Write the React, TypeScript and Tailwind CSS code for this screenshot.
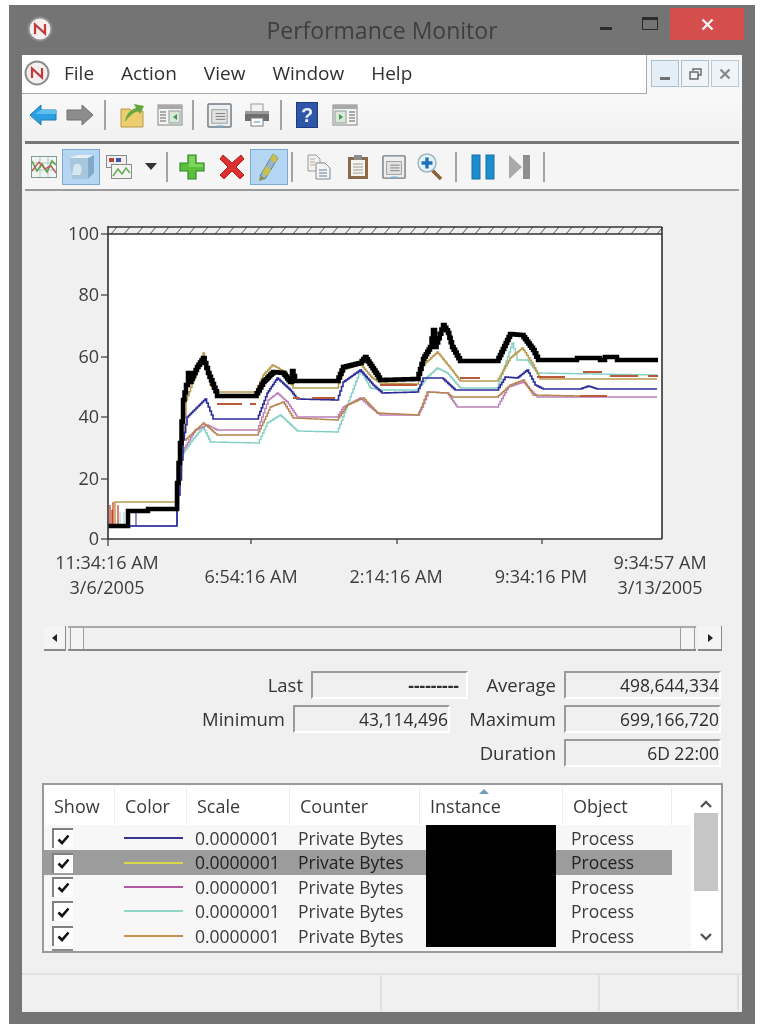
import React from "react";

type Pt = [number, number];

// turn a rough outline into the stair-stepped trace perfmon draws
const stepped = (pts: Pt[]): string => {
  let d = `M${pts[0][0]} ${pts[0][1]}`;
  for (let i = 1; i < pts.length; i++) {
    const [x0, y0] = pts[i - 1];
    const [x1, y1] = pts[i];
    const dy = y1 - y0;
    const dx = x1 - x0;
    if (dx === 0 || dy === 0) {
      d += `L${x1} ${y1}`;
      continue;
    }
    const n = Math.max(1, Math.round(Math.abs(dx) / 1.5));
    for (let s = 1; s <= n; s++) {
      d += `L${x0 + (dx * s) / n} ${y0 + (dy * (s - 1)) / n}L${x0 + (dx * s) / n} ${y0 + (dy * s) / n}`;
    }
  }
  return d;
};

const black: Pt[] = [[108,526],[128,526],[128,511],[148,511],[148,509],[177,509],[177,483],[180,443],[183,400],[186,385],[188,373],[190,382],[197,367],[203,358],[208,373],[217,395],[217,396],[255,396],[263,382],[273,372],[283,373],[290,382],[292,371],[295,381],[337,381],[343,367],[360,363],[365,357],[377,375],[380,380],[417,379],[423,359],[430,347],[433,330],[435,347],[443,325],[448,333],[452,347],[460,361],[497,361],[510,334],[522,335],[533,350],[538,360],[576,360],[577,358],[598,358],[600,360],[604,360],[605,357],[616,357],[617,360],[658,360]];
const blue: Pt[] = [[130,526],[177,526],[177,510],[180,480],[183,440],[187,417],[205,399],[213,419],[257,419],[267,393],[277,378],[290,390],[297,399],[337,400],[343,382],[360,370],[373,385],[382,393],[417,392],[423,378],[442,378],[455,390],[497,390],[505,377],[517,378],[527,370],[535,385],[543,389],[580,389],[588,386],[597,389],[657,389]];
const tan: Pt[] = [[115,526],[115,502],[177,502],[180,470],[186,400],[195,375],[203,353],[210,385],[217,392],[255,392],[263,375],[272,365],[285,372],[293,388],[337,388],[343,370],[360,364],[372,378],[380,383],[417,384],[423,365],[437,352],[450,368],[460,381],[497,381],[510,358],[522,348],[533,365],[540,379],[657,379]];
const magenta: Pt[] = [[183,450],[195,430],[207,425],[217,430],[257,430],[268,400],[277,393],[287,402],[297,417],[337,417],[343,407],[360,398],[370,407],[380,415],[417,415],[422,407],[428,392],[447,393],[457,407],[497,407],[508,387],[523,382],[537,397],[657,397]];
const teal: Pt[] = [[183,453],[192,440],[203,427],[210,442],[258,443],[267,423],[280,415],[297,431],[337,432],[350,397],[360,370],[370,388],[380,390],[417,390],[427,377],[437,368],[447,373],[460,388],[497,388],[512,343],[517,360],[527,360],[537,373],[657,375]];
const orange: Pt[] = [[185,440],[203,423],[217,435],[257,435],[270,407],[283,402],[293,418],[337,420],[347,405],[363,398],[377,413],[418,415],[427,392],[447,393],[452,397],[497,397],[510,385],[523,380],[533,395],[580,396],[607,396]];

const traces: { pts: Pt[]; color: string; width: string }[] = [
  { pts: teal, color: "#84cfc4", width: "1.4" },
  { pts: magenta, color: "#bb7fb8", width: "1.4" },
  { pts: orange, color: "#b7834f", width: "1.4" },
  { pts: tan, color: "#b89a4e", width: "1.5" },
  { pts: blue, color: "#2b2b9a", width: "1.6" },
];

const redDashes = ["M217 404H242", "M250 404H256", "M293 398H300", "M312 398H335", "M380 385H417", "M460 378H480", "M537 377H565", "M610 376H638", "M648 376H658", "M583 372H602", "M580 396H607"];

const PerfChart = () => (
  <svg viewBox="22 191 720 421" className="block h-[421px] w-[720px]" fontFamily="'Open Sans', sans-serif" fontSize="18" fill="#3c3c3c">
    <rect x="108" y="227" width="554" height="312" fill="#fff" />
    <rect x="108" y="227" width="554" height="7" fill="#efefef" />
    {Array.from({ length: 43 }, (_, i) => (
      <path key={i} d={`M${111 + i * 13} 234L${117 + i * 13} 227`} stroke="#555" strokeWidth="1" />
    ))}
    <path d="M108 234H662M108 227H662" stroke="#333" strokeWidth="1.3" />
    <path d="M110 526V505M113 526V502M112 526V510M118 526V505M128 526V510" stroke="#c8402a" strokeWidth="1.3" fill="none" />
    <path d="M120 526V512M124 526V512" stroke="#9ccfd0" strokeWidth="1" />
    <path d="M136 526V511M130 526H177V510" stroke="#4a4ab0" strokeWidth="1.2" fill="none" />
    {traces.map((t) => (
      <path key={t.color} d={stepped(t.pts)} stroke={t.color} strokeWidth={t.width} fill="none" />
    ))}
    <path d={redDashes.join("")} stroke="#bb5a3a" strokeWidth="2" fill="none" />
    <path d={stepped(black)} stroke="#000" strokeWidth="4.5" fill="none" />
    <path d="M108 226V540M108 539H662M662 227V539" stroke="#333" strokeWidth="1.6" fill="none" />
    {[["100", 234], ["80", 295], ["60", 357], ["40", 417], ["20", 479], ["0", 539]].map(([label, y]) => (
      <g key={label}>
        <path d={`M101 ${y}H108`} stroke="#444" strokeWidth="1.3" />
        <text x="99" y={Number(y) + 6} textAnchor="end">{label}</text>
      </g>
    ))}
    {[251, 397, 542].map((x) => (
      <path key={x} d={`M${x} 539V544`} stroke="#444" strokeWidth="1.3" />
    ))}
    <path d="M108 539V546" stroke="#444" strokeWidth="1.3" />
    <text x="107" y="569" textAnchor="middle">11:34:16 AM</text>
    <text x="107" y="594" textAnchor="middle">3/6/2005</text>
    <text x="251" y="583" textAnchor="middle">6:54:16 AM</text>
    <text x="396" y="583" textAnchor="middle">2:14:16 AM</text>
    <text x="541" y="583" textAnchor="middle">9:34:16 PM</text>
    <text x="660" y="569" textAnchor="middle">9:34:57 AM</text>
    <text x="660" y="594" textAnchor="middle">3/13/2005</text>
  </svg>
);

/* ---- icons ---- */

const PerfLogo = ({ size }: { size: number }) => (
  <svg width={size} height={size} viewBox="0 0 26 26">
    <circle cx="13" cy="13" r="11.5" fill="#f4eeee" stroke="#8d8d8d" strokeWidth="2" />
    <path d="M8 18V8.5L18 17.5V8" fill="none" stroke="#c03a3a" strokeWidth="2.2" />
  </svg>
);

const BackArrow = () => (
  <svg width="28" height="22" viewBox="0 0 28 22">
    <path d="M1 11L12 1V6H27V16H12V21Z" fill="#2b9fe0" stroke="#1c78b8" strokeWidth="1" />
    <path d="M12 6H27V10H6Z" fill="#5cc0f0" />
  </svg>
);

const ForwardArrow = () => (
  <svg width="28" height="22" viewBox="0 0 28 22">
    <path d="M27 11L16 1V6H1V16H16V21Z" fill="#8c8c8c" stroke="#707070" strokeWidth="1" />
  </svg>
);

const Folder = () => (
  <svg width="26" height="26" viewBox="0 0 26 26">
    <path d="M2 7H11L13 9H24V25H2Z" fill="#edcd6f" stroke="#b79a4b" />
    <path d="M6 20C7 12 11 8 17 6L15 2L25 4L21 12L19 9C14 11 10 14 6 20Z" fill="#62a83a" />
  </svg>
);

const PanelIcon = ({ flip }: { flip?: boolean }) => (
  <svg width="26" height="22" viewBox="0 0 26 22">
    <rect x="1" y="1" width="24" height="20" fill="#f4f4f4" stroke="#858585" />
    <rect x="1" y="1" width="24" height="4" fill="#a9a9a9" />
    <rect x={flip ? "3" : "12"} y="7" width="11" height="12" fill="#dbe6dc" stroke="#8aa08e" />
    <path d={flip ? "M7 10L11 13L7 16Z" : "M20 10L16 13L20 16Z"} fill="#3c9a4a" />
    <path d={flip ? "M17 8h6M17 11h6M17 14h6M17 17h6" : "M3 8h6M3 11h6M3 14h6M3 17h6"} stroke="#909090" strokeWidth="1.5" />
  </svg>
);

const PropsIcon = ({ size }: { size: number }) => (
  <svg width={size} height={size} viewBox="0 0 26 26">
    <rect x="1" y="1" width="24" height="24" rx="1" fill="#efefef" stroke="#6f7b85" strokeWidth="1.5" />
    <rect x="5" y="7" width="16" height="14" fill="#e3e3e3" stroke="#9a9a9a" />
    <path d="M9 11H19M9 14H19M9 17H19" stroke="#7d7d7d" />
    <path d="M10 24H17" stroke="#6fb4d8" strokeWidth="1.5" />
  </svg>
);

const Printer = () => (
  <svg width="26" height="24" viewBox="0 0 26 24">
    <rect x="7" y="1" width="12" height="8" fill="#f3f3f3" stroke="#9a9a9a" />
    <rect x="1" y="8" width="24" height="10" fill="#6e6e6e" />
    <rect x="1" y="8" width="24" height="3" fill="#9c9c9c" />
    <rect x="7" y="15" width="12" height="8" fill="#fff" stroke="#7c7c7c" />
    <path d="M10 19H16" stroke="#4d90b8" />
  </svg>
);

const HelpIcon = () => (
  <svg width="22" height="26" viewBox="0 0 22 26">
    <rect x="0.5" y="0.5" width="21" height="25" fill="#2f55a8" stroke="#1f3b80" />
    <text x="11" y="20" textAnchor="middle" fontSize="20" fontWeight="700" fill="#e8eefc" fontFamily="'Liberation Sans', sans-serif">?</text>
  </svg>
);

const GraphIcon = () => (
  <svg width="26" height="22" viewBox="0 0 26 22">
    <rect x="0.5" y="0.5" width="25" height="21" fill="#f1f5f3" stroke="#7e9a96" />
    <path d="M1 7H25M1 14H25M9 1V21M17 1V21" stroke="#b7c6c8" />
    <path d="M1 5L6 15L11 8L16 16L21 5L25 9" fill="none" stroke="#5da34c" strokeWidth="1.6" />
    <path d="M1 15L8 6L14 13L20 10L25 17" fill="none" stroke="#c45a55" strokeWidth="1.4" />
  </svg>
);

const CubeIcon = () => (
  <svg width="30" height="28" viewBox="0 0 30 28">
    <path d="M3 5L12 2H28V20L22 26H6Z" fill="#cfe2ef" />
    <path d="M3 5H22V26H6Z" fill="#a8c7dc" />
    <path d="M3 5L12 2H28L22 5Z" fill="#e7f0f6" />
    <path d="M22 5L28 2V20L22 26Z" fill="#7faac9" />
    <path d="M8 12C14 8 18 14 14 22H6Z" fill="#e4eef5" opacity="0.8" />
  </svg>
);

const MultiChartIcon = () => (
  <svg width="26" height="24" viewBox="0 0 26 24">
    <rect x="0.5" y="0.5" width="20" height="12" fill="#eceff3" stroke="#8c8c8c" />
    <rect x="3" y="3" width="5" height="4" fill="#b9413f" />
    <rect x="10" y="3" width="5" height="4" fill="#4a4fa0" />
    <rect x="5.5" y="9.5" width="20" height="14" fill="#f2f4ee" stroke="#8c8c8c" />
    <path d="M7 21L12 14L16 19L20 13L24 18" fill="none" stroke="#6aa85a" strokeWidth="1.5" />
  </svg>
);

const PlusIcon = () => (
  <svg width="26" height="26" viewBox="0 0 26 26">
    <path d="M9 1H17V9H25V17H17V25H9V17H1V9H9Z" fill="#5cc03c" stroke="#2f8a2a" strokeWidth="1.2" />
    <path d="M10 2H16V10H24V13H10Z" fill="#8ade6a" opacity="0.7" />
  </svg>
);

const RedX = () => (
  <svg width="26" height="26" viewBox="0 0 26 26">
    <path d="M4 1L13 9L22 1L25 5L17 13L25 21L21 25L13 17L5 25L1 21L9 13L1 5Z" fill="#dd3130" stroke="#b02424" />
  </svg>
);

const PenIcon = () => (
  <svg width="24" height="30" viewBox="0 0 24 30">
    <path d="M16 2L21 6L8 27L3 24Z" fill="#9cb3c4" stroke="#5f7f96" />
    <path d="M16 2L21 6L18 11L13 7Z" fill="#c8c14a" />
    <path d="M9 14L14 18L10 24L5 21Z" fill="#c8c14a" />
    <path d="M3 24L8 27L2 29Z" fill="#8f8f3a" />
  </svg>
);

const CopyIcon = () => (
  <svg width="24" height="26" viewBox="0 0 24 26">
    <path d="M1 1H9L13 5V17H1Z" fill="#f1f1f1" stroke="#9a9a9a" />
    <path d="M9 9H18L23 14V25H9Z" fill="#f4f4f4" stroke="#7f8b90" />
    <path d="M12 16H20M12 19H20M12 22H20" stroke="#5f7f96" />
    <path d="M3 5H8M3 8H8M3 11H8" stroke="#b9a98c" />
  </svg>
);

const ClipboardIcon = () => (
  <svg width="22" height="26" viewBox="0 0 22 26">
    <rect x="1" y="3" width="20" height="22" fill="#8a6a4a" />
    <rect x="4" y="6" width="14" height="16" fill="#f6f4ee" />
    <rect x="7" y="1" width="8" height="5" fill="#8d8d8d" />
    <path d="M6 10H16M6 13H16M6 16H16M6 19H16" stroke="#9c9c9c" />
  </svg>
);

const ZoomIcon = () => (
  <svg width="26" height="28" viewBox="0 0 26 28">
    <path d="M15 17L24 26" stroke="#8a6036" strokeWidth="3.5" />
    <circle cx="10" cy="10" r="9" fill="#e8f1f6" stroke="#9eb5c2" strokeWidth="1.5" />
    <path d="M10 4.5V15.5M4.5 10H15.5" stroke="#1f74b8" strokeWidth="3.4" />
  </svg>
);

const PauseIcon = () => (
  <svg width="24" height="26" viewBox="0 0 24 26">
    <rect x="1" y="1" width="8" height="24" fill="#1c8ed0" stroke="#1a6f9f" />
    <rect x="15" y="1" width="8" height="24" fill="#1c8ed0" stroke="#1a6f9f" />
  </svg>
);

const StepIcon = () => (
  <svg width="24" height="26" viewBox="0 0 24 26">
    <path d="M1 1L14 13L1 25Z" fill="#a9a9a9" />
    <rect x="15" y="1" width="7" height="24" fill="#8f8f8f" />
  </svg>
);

const CheckBox = () => (
  <span className="flex h-[20px] w-[21px] items-center justify-center border-t-2 border-l-2 border-[#808080] bg-white">
    <svg width="13" height="11" viewBox="0 0 13 11">
      <path d="M1.5 5.5L5 9L11.5 1.5" fill="none" stroke="#111" strokeWidth="2.6" />
    </svg>
  </span>
);

const ToolSep = ({ className }: { className: string }) => (
  <div className={`flex justify-center ${className}`}>
    <div className="h-[30px] w-[2px] bg-[#a3a3a3]" />
  </div>
);

const Slot = ({ className, children }: { className: string; children: React.ReactNode }) => (
  <div className={`flex items-center justify-center ${className}`}>{children}</div>
);

const Active = ({ className, children }: { className: string; children: React.ReactNode }) => (
  <div className={`flex h-[36px] items-center justify-center border border-[#7fa9d0] bg-[#b4d6f2] ${className}`}>{children}</div>
);

const StatBox = ({ value, className }: { value: string; className: string }) => (
  <div className={`flex h-[28px] items-center justify-end border-2 border-t-[#9a9a9a] border-r-white border-b-white border-l-[#9a9a9a] text-[17.5px] text-[#2e2e2e] ${className}`}>
    {value}
  </div>
);

const columns = ["Show", "Color", "Scale", "Counter", "Instance", "Object"];
const headerWidths = ["w-[71px]", "w-[72px]", "w-[103px]", "w-[130px]", "w-[143px]", "w-[109px]"];
const rows = [
  { color: "bg-[#35358f]", selected: false },
  { color: "bg-[#d7d84e]", selected: true },
  { color: "bg-[#b05aa0]", selected: false },
  { color: "bg-[#8fd8c8]", selected: false },
  { color: "bg-[#c98f55]", selected: false },
];

const CounterList = () => (
  <div className="relative mr-[19px] ml-[20px] flex h-[170px] overflow-hidden border-2 border-[#9a9a9a] bg-[#f7f7f7] text-[17.5px] text-[#3a3a3a]">
    <div className="w-[647px] shrink-0">
      <div className="flex h-[40px] items-center bg-white pt-[2px] text-[18px]">
        {columns.map((c, i) => (
          <div key={c} className={`relative flex h-full shrink-0 items-center border-r border-[#ececec] pl-[10px] ${headerWidths[i]}`}>
            {c === "Instance" && (
              <svg className="absolute top-[1px] left-[58px]" width="12" height="6" viewBox="0 0 12 6">
                <path d="M1 6L6 1L11 6" fill="#6f9fb8" />
              </svg>
            )}
            {c}
          </div>
        ))}
      </div>
      <div className="pt-[1px]">
        {rows.map((r, i) => (
          <div key={i} className="flex h-[24.4px] items-center">
            <div className={`flex h-full w-[29px] shrink-0 items-center justify-end ${r.selected ? "bg-[#9c9c9c]" : ""}`}>
              <CheckBox />
            </div>
            <div className={`flex h-full w-[599px] shrink-0 items-center ${r.selected ? "bg-[#9c9c9c] text-[#222]" : ""}`}>
              <div className="w-[122px] shrink-0 pl-[51px]">
                <div className={`h-[2px] w-[59px] ${r.color}`} />
              </div>
              <div className="w-[103px] shrink-0">0.0000001</div>
              <div className="w-[273px] shrink-0">Private Bytes</div>
              <div>Process</div>
            </div>
          </div>
        ))}
      </div>
      <div className="mt-[1px] ml-[8px] h-[2px] w-[21px] bg-[#8a8a8a]" />
    </div>
    <div className="flex flex-1 flex-col items-center bg-white">
      <svg className="mt-[15px]" width="14" height="9" viewBox="0 0 14 9">
        <path d="M2 7L7 2L12 7" fill="none" stroke="#555" strokeWidth="2.4" />
      </svg>
      <div className="mt-[4px] h-[78px] w-[24px] bg-[#c6c6c6]" />
      <svg className="mt-[41px]" width="14" height="9" viewBox="0 0 14 9">
        <path d="M2 2L7 7L12 2" fill="none" stroke="#555" strokeWidth="2.4" />
      </svg>
    </div>
    <div className="absolute top-[40px] left-[382px] h-[122px] w-[130px] bg-black" />
  </div>
);

export default function App() {
  return (
    <div className="h-[1031px] w-[766px] overflow-hidden bg-white pt-[5px] pl-[9px] blur-[0.6px]" style={{ fontFamily: "'Open Sans', sans-serif" }}>
      <div className="h-[1019px] w-[746px] bg-[#747474]">
        {/* Title bar */}
        <div className="grid h-[50px] grid-cols-[1fr_auto_1fr]">
          <div className="flex items-center pb-[2px] pl-[18px]">
            <PerfLogo size={26} />
          </div>
          <div className="flex items-center text-[23px] text-[#3e3e3e]">Performance Monitor</div>
          <div className="flex items-start justify-end pt-[3px] pr-[11px]">
            <div className="mt-[19px] mr-[30px] h-[3px] w-[12px] bg-[#2b2b2b]" />
            <div className="mt-[9px] mr-[12px] h-[13px] w-[16px] border-[1.5px] border-t-[3px] border-[#2b2b2b]" />
            <div className="flex h-[32px] w-[74px] items-center justify-center bg-[#d44e4e]">
              <svg width="13" height="13" viewBox="0 0 13 13">
                <path d="M1.5 1.5L11.5 11.5M11.5 1.5L1.5 11.5" stroke="#f4f4f4" strokeWidth="2.4" />
              </svg>
            </div>
          </div>
        </div>

        {/* Client area */}
        <div className="ml-[13px] h-[957px] w-[720px] bg-[#f0f0f0]">
          {/* Menu bar */}
          <div className="flex h-[39px]">
            <div className="flex w-[625px] items-center gap-[27px] border-r border-b border-[#a9a9a9] bg-white pb-[2px] pl-[2px] text-[19px] text-[#303030]">
              <div className="-mr-[13px]">
                <PerfLogo size={26} />
              </div>
              <span>File</span>
              <span>Action</span>
              <span>View</span>
              <span>Window</span>
              <span>Help</span>
            </div>
            <div className="flex flex-1 items-start gap-[2px] bg-[#f7f7f7] pt-[5px] pl-[4px]">
              <div className="flex h-[27px] w-[28px] items-end justify-center border border-[#a9c0d0] bg-[#e3eef6] pb-[6px]">
                <div className="h-[3px] w-[10px] bg-[#707070]" />
              </div>
              <div className="flex h-[27px] w-[28px] items-center justify-center border border-[#a9c0d0] bg-[#eef4f8]">
                <svg width="13" height="12" viewBox="0 0 13 12">
                  <path d="M4 3V1H12V7H9M1 4H9V11H1Z" fill="none" stroke="#6a6a6a" strokeWidth="1.5" />
                </svg>
              </div>
              <div className="flex h-[27px] w-[28px] items-center justify-center border border-[#b8c8d4] bg-[#eef4f8]">
                <svg width="12" height="12" viewBox="0 0 12 12">
                  <path d="M1.5 1.5L10.5 10.5M10.5 1.5L1.5 10.5" stroke="#8a8a8a" strokeWidth="2.4" />
                </svg>
              </div>
            </div>
          </div>

          {/* Toolbar one */}
          <div className="flex h-[47px] items-center bg-gradient-to-b from-[#f9f9f9] to-[#f1f1f1] pb-[5px] pl-[4px]">
            <Slot className="w-[34px]"><BackArrow /></Slot>
            <Slot className="ml-[3px] w-[34px]"><ForwardArrow /></Slot>
            <ToolSep className="w-[16px]" />
            <Slot className="w-[38px]"><Folder /></Slot>
            <Slot className="w-[38px]"><PanelIcon /></Slot>
            <ToolSep className="w-[8px]" />
            <Slot className="w-[44px]"><PropsIcon size={25} /></Slot>
            <Slot className="w-[32px]"><Printer /></Slot>
            <ToolSep className="w-[16px]" />
            <Slot className="w-[36px]"><HelpIcon /></Slot>
            <Slot className="w-[40px]"><PanelIcon flip /></Slot>
          </div>

          {/* Toolbar two */}
          <div className="mx-[3px] border-t-[3px] border-b-2 border-t-[#767676] border-b-[#9a9a9a]">
            <div className="-mx-[3px] flex h-[45px] items-center bg-[#f5f5f5] pl-[4px]">
              <Slot className="w-[36px]"><GraphIcon /></Slot>
              <Active className="w-[38px]"><CubeIcon /></Active>
              <Slot className="w-[38px]"><MultiChartIcon /></Slot>
              <Slot className="w-[26px]">
                <svg width="12" height="7" viewBox="0 0 12 7">
                  <path d="M0 0H12L6 7Z" fill="#333" />
                </svg>
              </Slot>
              <ToolSep className="w-[6px]" />
              <Slot className="w-[44px]"><PlusIcon /></Slot>
              <Slot className="w-[36px]"><RedX /></Slot>
              <Active className="w-[38px]"><PenIcon /></Active>
              <ToolSep className="w-[8px]" />
              <Slot className="w-[46px]"><CopyIcon /></Slot>
              <Slot className="w-[32px]"><ClipboardIcon /></Slot>
              <Slot className="w-[40px]"><PropsIcon size={24} /></Slot>
              <Slot className="w-[32px]"><ZoomIcon /></Slot>
              <ToolSep className="w-[20px]" />
              <Slot className="w-[34px]"><PauseIcon /></Slot>
              <Slot className="w-[40px]"><StepIcon /></Slot>
              <ToolSep className="w-[8px]" />
            </div>
          </div>

          <PerfChart />

          {/* Time range scrollbar */}
          <div className="mt-[14px] mr-[20px] ml-[22px] flex h-[25px] items-stretch">
            <div className="flex w-[22px] items-center justify-center border-r border-b-2 border-[#8a8a8a] bg-[#f4f4f4]">
              <svg width="6" height="8" viewBox="0 0 6 8"><path d="M5 0V8L0 4Z" fill="#222" /></svg>
            </div>
            <div className="ml-[2px] flex flex-1 items-stretch border-t-2 border-b-2 border-t-[#a8a8a8] border-b-[#888]">
              <div className="ml-[2px] w-[14px] border-x border-[#9c9c9c] bg-[#f4f4f4]" />
              <div className="flex-1" />
              <div className="mr-[1px] w-[15px] border-x border-[#9c9c9c] bg-[#f4f4f4]" />
            </div>
            <div className="ml-[2px] flex w-[24px] items-center justify-center border-r border-b-2 border-[#8a8a8a] bg-[#f4f4f4]">
              <svg width="6" height="8" viewBox="0 0 6 8"><path d="M1 0V8L6 4Z" fill="#222" /></svg>
            </div>
          </div>

          {/* Stats */}
          <div className="mt-[20px] mr-[20px] grid grid-cols-[263px_157px_96px_157px] items-center gap-y-[6px] pl-[26px] text-[18.5px] text-[#333]">
            <div className="pr-[8px] text-right">Last</div>
            <StatBox value="---------" className="w-[157px] pr-[7px] font-bold" />
            <div className="pr-[8px] text-right">Average</div>
            <StatBox value="498,644,334" className="w-[157px]" />

            <div className="-translate-x-[18px] pr-[8px] text-right">Minimum</div>
            <StatBox value="43,114,496" className="w-[157px] -translate-x-[18px]" />
            <div className="pr-[8px] text-right">Maximum</div>
            <StatBox value="699,166,720" className="w-[157px]" />

            <div className="col-start-3 pr-[8px] text-right">Duration</div>
            <StatBox value="6D 22:00" className="w-[157px]" />
          </div>

          <div className="mt-[16px]">
            <CounterList />
          </div>

          {/* Status bar */}
          <div className="mt-[20px] flex h-[38px] border-t-2 border-[#e0e0e0]">
            <div className="w-[360px] border-r-2 border-[#e0e0e0]" />
            <div className="w-[218px] border-r-2 border-[#e0e0e0]" />
            <div className="w-[139px] border-r-2 border-[#e0e0e0]" />
          </div>
        </div>
      </div>
    </div>
  );
}
